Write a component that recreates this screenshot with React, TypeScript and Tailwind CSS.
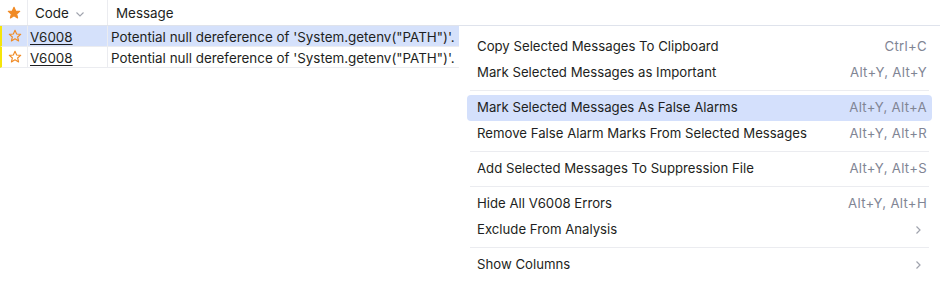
import React from "react";

const Star = ({ filled }: { filled?: boolean }) => (
  <svg width="14" height="14" viewBox="0 0 16 16">
    <path
      d="M8 1.5l1.9 4.2 4.6.4-3.5 3 1.1 4.5L8 11.2l-4.1 2.4L5 9.1 1.5 6.1l4.6-.4z"
      fill={filled ? "#f08a24" : "none"}
      stroke="#f08a24"
      strokeWidth="1.3"
      strokeLinejoin="round"
    />
  </svg>
);

const Chevron = () => (
  <svg width="10" height="10" viewBox="0 0 10 10">
    <path d="M3.5 1.5L7 5 3.5 8.5" fill="none" stroke="#a0a3ad" strokeWidth="1.2" />
  </svg>
);

type Item = { label: string; shortcut?: string; sub?: boolean; active?: boolean; sep?: boolean };

const items: Item[] = [
  { label: "Copy Selected Messages To Clipboard", shortcut: "Ctrl+C" },
  { label: "Mark Selected Messages as Important", shortcut: "Alt+Y, Alt+Y" },
  { sep: true, label: "" },
  { label: "Mark Selected Messages As False Alarms", shortcut: "Alt+Y, Alt+A", active: true },
  { label: "Remove False Alarm Marks From Selected Messages", shortcut: "Alt+Y, Alt+R" },
  { sep: true, label: "" },
  { label: "Add Selected Messages To Suppression File", shortcut: "Alt+Y, Alt+S" },
  { sep: true, label: "" },
  { label: "Hide All V6008 Errors", shortcut: "Alt+Y, Alt+H" },
  { label: "Exclude From Analysis", sub: true },
  { sep: true, label: "" },
  { label: "Show Columns", sub: true },
];

const rows = [true, false];

export default function App() {
  return (
    <div
      className="relative w-[940px] h-[285px] overflow-hidden bg-white text-[13.4px] text-[#1e1f22]"
      style={{ fontFamily: "Inter, 'Noto Sans', sans-serif" }}
    >
      <div className="flex h-[26px] border-b border-[#dfe3ec]">
        <div className="w-[28px] flex items-center justify-center border-r border-[#ebecf0]">
          <Star filled />
        </div>
        <div className="w-[80px] flex items-center pl-[7px] pt-[2px] gap-[6px] border-r border-[#ebecf0]">
          <span>Code</span>
          <svg width="10" height="10" viewBox="0 0 10 10">
            <path d="M1.5 3.5L5 7l3.5-3.5" fill="none" stroke="#a0a3ad" strokeWidth="1.1" />
          </svg>
        </div>
        <div className="flex-1 flex items-center pl-[8px] pt-[2px]">Message</div>
      </div>
      {rows.map((sel, i) => (
        <div
          key={i}
          className={`flex h-[21px] border-b border-[#ebecf0] border-l-2 border-l-[#f5e50a] ${sel ? "bg-[#d5e1fb]" : "bg-white"}`}
        >
          <div className="w-[26px] flex items-center justify-center border-r border-[#ebecf0]">
            <Star />
          </div>
          <div className="w-[80px] flex items-center pl-[2px] pt-[2px] border-r border-[#ebecf0]">
            <span className="underline underline-offset-2">V6008</span>
          </div>
          <div className="flex-1 flex items-center pl-[3px] pt-[2px]">
            Potential null dereference of 'System.getenv("PATH")'.
          </div>
        </div>
      ))}
      <div className="absolute left-[459px] top-[26px] w-[481px] h-[270px] bg-white pt-[8px] px-[8px] text-[13.2px]">
        {items.map((it, i) =>
          it.sep ? (
            <div key={i} className="h-[9px] flex items-center px-[3px]">
              <div className="h-px w-full bg-[#ebecf0]" />
            </div>
          ) : (
            <div
              key={i}
              className={`h-[26px] flex items-center justify-between pl-[10px] pr-[5px] rounded-[4px] ${it.active ? "bg-[#d4e0fc]" : ""}`}
            >
              <span>{it.label}</span>
              {it.shortcut ? (
                <span className="text-[#818594] tracking-[0.3px]">{it.shortcut}</span>
              ) : it.sub ? (
                <span className="pr-[4px]">
                  <Chevron />
                </span>
              ) : null}
            </div>
          )
        )}
      </div>
    </div>
  );
}
